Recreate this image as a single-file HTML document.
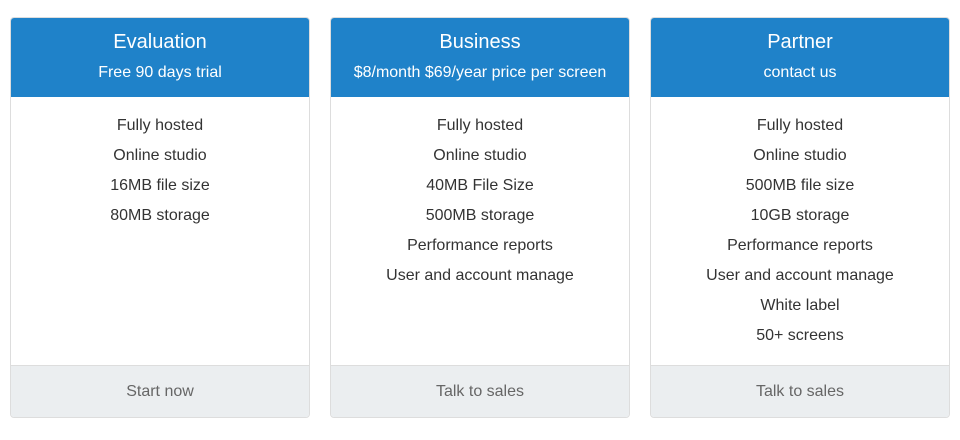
<!DOCTYPE html><html><head><style>
body{margin:0;background:#fff;font-family:"Liberation Sans",sans-serif;}
.c{position:absolute;top:17px;width:298px;height:399px;border:1px solid #ddd;border-radius:4px;overflow:hidden;background:#fff}
.h{background:#1f82c9;color:#fff;text-align:center;height:80px;margin:-1px -1px 0;}
.t{font-size:20px;padding-top:14px;line-height:22px}
.s{font-size:16px;margin-top:11px;line-height:18px}
ul{list-style:none;margin:0;padding:14px 0 0;text-align:center;font-size:16px;color:#333}
li{line-height:30px}
.f{position:absolute;left:0;right:0;bottom:0;height:51px;border-top:1px solid #ddd;background:#ebeef0;text-align:center;line-height:52px;font-size:16px;color:#666}
</style></head><body>
<div class="c" style="left:10px"><div class="h"><div class="t">Evaluation</div><div class="s">Free 90 days trial</div></div>
<ul><li>Fully hosted</li><li>Online studio</li><li>16MB file size</li><li>80MB storage</li></ul><div class="f">Start now</div></div>
<div class="c" style="left:330px"><div class="h"><div class="t">Business</div><div class="s">$8/month $69/year price per screen</div></div>
<ul><li>Fully hosted</li><li>Online studio</li><li>40MB File Size</li><li>500MB storage</li><li>Performance reports</li><li>User and account manage</li></ul><div class="f">Talk to sales</div></div>
<div class="c" style="left:650px"><div class="h"><div class="t">Partner</div><div class="s">contact us</div></div>
<ul><li>Fully hosted</li><li>Online studio</li><li>500MB file size</li><li>10GB storage</li><li>Performance reports</li><li>User and account manage</li><li>White label</li><li>50+ screens</li></ul><div class="f">Talk to sales</div></div>
</body></html>
